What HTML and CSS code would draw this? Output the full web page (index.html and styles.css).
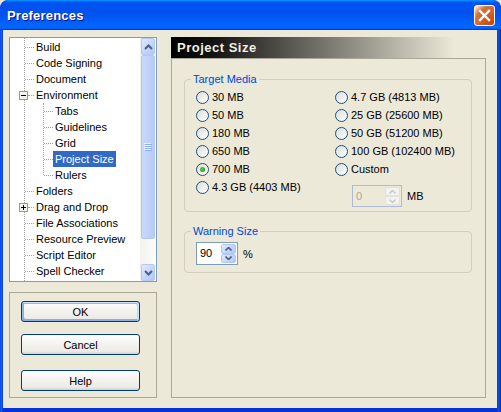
FILE: index.html
```html
<!DOCTYPE html>
<html>
<head>
<meta charset="utf-8">
<link rel="stylesheet" href="styles.css">
</head>
<body>
<div class="window">
  <div class="titlebar">
    <span class="title">Preferences</span>
    <button class="close" aria-label="Close">
      <svg width="13" height="13" viewBox="0 0 13 13"><path d="M2 2L11 11M11 2L2 11" stroke="#fff" stroke-width="2.4" stroke-linecap="square"/></svg>
    </button>
  </div>
  <div class="client">
    <div class="left">
      <div class="tree">
        <div class="tree-list">
          <div class="row l1"><span class="hl"></span><span class="lbl">Build</span></div>
          <div class="row l1"><span class="hl"></span><span class="lbl">Code Signing</span></div>
          <div class="row l1"><span class="hl"></span><span class="lbl">Document</span></div>
          <div class="row l1 exp-row"><svg class="exp" width="9" height="9" viewBox="0 0 9 9"><rect x="0.5" y="0.5" width="8" height="8" fill="#F4F3EE" stroke="#919B9C"/><path d="M2 4.5H7" stroke="#000"/></svg><span class="hl short"></span><span class="lbl">Environment</span></div>
          <div class="children">
            <div class="row l2"><span class="hl"></span><span class="lbl">Tabs</span></div>
            <div class="row l2"><span class="hl"></span><span class="lbl">Guidelines</span></div>
            <div class="row l2"><span class="hl"></span><span class="lbl">Grid</span></div>
            <div class="row l2"><span class="hl"></span><span class="lbl sel">Project Size</span></div>
            <div class="row l2"><span class="hl"></span><span class="lbl">Rulers</span></div>
          </div>
          <div class="row l1"><span class="hl"></span><span class="lbl">Folders</span></div>
          <div class="row l1 exp-row"><svg class="exp" width="9" height="9" viewBox="0 0 9 9"><rect x="0.5" y="0.5" width="8" height="8" fill="#F4F3EE" stroke="#919B9C"/><path d="M2 4.5H7M4.5 2V7" stroke="#000"/></svg><span class="hl short"></span><span class="lbl">Drag and Drop</span></div>
          <div class="row l1"><span class="hl"></span><span class="lbl">File Associations</span></div>
          <div class="row l1"><span class="hl"></span><span class="lbl">Resource Preview</span></div>
          <div class="row l1"><span class="hl"></span><span class="lbl">Script Editor</span></div>
          <div class="row l1"><span class="hl"></span><span class="lbl">Spell Checker</span></div>
        </div>
        <div class="vscroll">
          <div class="sb-btn"><svg width="9" height="6" viewBox="0 0 9 6"><path d="M1 5L4.5 1.5L8 5" fill="none" stroke="#4D6185" stroke-width="2"/></svg></div>
          <div class="sb-thumb"><svg width="8" height="8" viewBox="0 0 8 8"><path d="M0 0.5H7M0 2.5H7M0 4.5H7M0 6.5H7" stroke="#EEF4FE"/><path d="M1 1.5H8M1 3.5H8M1 5.5H8M1 7.5H8" stroke="#8CB0F8"/></svg></div>
          <div class="sb-track"></div>
          <div class="sb-btn"><svg width="9" height="6" viewBox="0 0 9 6"><path d="M1 1L4.5 4.5L8 1" fill="none" stroke="#4D6185" stroke-width="2"/></svg></div>
        </div>
      </div>
      <div class="actions">
        <button class="btn default">OK</button>
        <button class="btn cancel">Cancel</button>
        <button class="btn help">Help</button>
      </div>
    </div>
    <div class="panel">
      <div class="panel-head">Project Size</div>
      <div class="panel-body">
        <fieldset class="group media">
          <legend>Target Media</legend>
          <div class="cols">
            <div class="col col1">
              <label class="opt"><span class="radio"></span>30 MB</label>
              <label class="opt"><span class="radio"></span>50 MB</label>
              <label class="opt"><span class="radio"></span>180 MB</label>
              <label class="opt"><span class="radio"></span>650 MB</label>
              <label class="opt"><span class="radio checked"></span>700 MB</label>
              <label class="opt"><span class="radio"></span>4.3 GB (4403 MB)</label>
            </div>
            <div class="col col2">
              <label class="opt"><span class="radio"></span>4.7 GB (4813 MB)</label>
              <label class="opt"><span class="radio"></span>25 GB (25600 MB)</label>
              <label class="opt"><span class="radio"></span>50 GB (51200 MB)</label>
              <label class="opt"><span class="radio"></span>100 GB (102400 MB)</label>
              <label class="opt"><span class="radio"></span>Custom</label>
              <div class="spin-row custom">
                <div class="spinner disabled wide">
                  <span class="spin-val">0</span>
                  <span class="spin-btns">
                    <span class="sbtn"><svg width="7" height="4" viewBox="0 0 7 4"><path d="M0.5 3.5L3.5 0.5L6.5 3.5" fill="none" stroke="#C2C6D0" stroke-width="1.4"/></svg></span>
                    <span class="sbtn"><svg width="7" height="4" viewBox="0 0 7 4"><path d="M0.5 0.5L3.5 3.5L6.5 0.5" fill="none" stroke="#C2C6D0" stroke-width="1.4"/></svg></span>
                  </span>
                </div>
                <span class="unit">MB</span>
              </div>
            </div>
          </div>
        </fieldset>
        <fieldset class="group warn">
          <legend>Warning Size</legend>
          <div class="spin-row inner">
            <div class="spinner">
              <span class="spin-val">90</span>
              <span class="spin-btns">
                <span class="sbtn"><svg width="7" height="4" viewBox="0 0 7 4"><path d="M0.5 3.5L3.5 0.5L6.5 3.5" fill="none" stroke="#4D6185" stroke-width="1.6"/></svg></span>
                <span class="sbtn"><svg width="7" height="4" viewBox="0 0 7 4"><path d="M0.5 0.5L3.5 3.5L6.5 0.5" fill="none" stroke="#4D6185" stroke-width="1.6"/></svg></span>
              </span>
            </div>
            <span class="unit">%</span>
          </div>
        </fieldset>
      </div>
    </div>
  </div>
</div>
</body>
</html>
```

FILE: styles.css
```css
* { box-sizing: border-box; }
html, body { margin: 0; padding: 0; }
body {
  width: 501px;
  height: 412px;
  overflow: hidden;
  background: #ECE9D8;
  font-family: "Liberation Sans", Arial, sans-serif;
  font-size: 11px;
  color: #000;
}
.window {
  width: 501px;
  height: 412px;
  display: flex;
  flex-direction: column;
  background: linear-gradient(to right, #0831D9 0, #166AEE 1px, #0855DD 2px, #0831D9 3px, #0831D9 497px, #0855DD 498px, #0842D0 500px, #001EA0 501px);
  border-radius: 8px 8px 0 0;
  overflow: hidden;
}
.titlebar {
  height: 30px;
  flex: none;
  display: flex;
  align-items: center;
  justify-content: space-between;
  padding: 1px 6px 0 7px;
  background: linear-gradient(to bottom, #0997FF 0, #0053EE 8%, #0050EE 40%, #0066FF 88%, #0066FF 93%, #005BFF 95%, #003DD7 96%, #003DD7 100%);
  border-radius: 8px 8px 0 0;
}
.title {
  color: #fff;
  font-weight: bold;
  font-size: 13px;
  letter-spacing: 0.2px;
  text-shadow: 1px 1px #0F1089;
}
.close {
  width: 21px;
  height: 21px;
  padding: 0;
  margin: 0;
  border: 1px solid #fff;
  border-radius: 3px;
  background: radial-gradient(circle at 90% 90%, #CC4600 0, #DC6527 55%, #CD7546 70%, #FFCCB2 90%, #fff 100%);
  display: flex;
  align-items: center;
  justify-content: center;
}
.client {
  flex: 1;
  margin: 0 4px 4px 3px;
  background: #ECE9D8;
  display: flex;
  align-items: flex-start;
  padding: 7px 0 0 6px;
}
.left {
  width: 148px;
  flex: none;
  display: flex;
  flex-direction: column;
}
.tree {
  height: 245px;
  border: 1px solid #7F9DB9;
  background: #fff;
  display: flex;
}
.tree-list {
  flex: 1;
  position: relative;
  padding-top: 1px;
}
.tree-list::before {
  content: "";
  position: absolute;
  left: 14px;
  top: 0;
  bottom: 0;
  border-left: 1px dotted #A0A0A0;
}
.children { position: relative; }
.children::before {
  content: "";
  position: absolute;
  left: 33px;
  top: 0;
  bottom: 8px;
  border-left: 1px dotted #A0A0A0;
}
.row {
  height: 16px;
  display: flex;
  align-items: center;
  position: relative;
  white-space: nowrap;
}
.row.l1 { padding-left: 15px; }
.row.l2 { padding-left: 34px; }
.row.exp-row { padding-left: 9px; }
.hl {
  width: 9px;
  height: 0;
  border-top: 1px dotted #A0A0A0;
  flex: none;
}
.hl.short { width: 6px; }
.exp { flex: none; display: block; position: relative; }
.lbl {
  padding: 0 2px;
  height: 16px;
  line-height: 16px;
}
.lbl.sel {
  background: #316AC5;
  color: #fff;
}
.vscroll {
  width: 16px;
  flex: none;
  display: flex;
  flex-direction: column;
  background: linear-gradient(to right, #F3F1EC, #FEFEFB);
}
.sb-btn {
  height: 17px;
  flex: none;
  margin: 0 1px;
  border: 1px solid #B5C8F2;
  border-radius: 2px;
  background: linear-gradient(135deg, #E1EAFE, #C1D3FB 60%, #B4C8F6);
  display: flex;
  align-items: center;
  justify-content: center;
}
.sb-thumb {
  height: 184px;
  flex: none;
  margin: 0 1px;
  border: 1px solid #B5C8F2;
  border-radius: 2px;
  background: linear-gradient(to right, #C9D8FC, #C1D3FB 50%, #B6CAF7);
  display: flex;
  align-items: center;
  justify-content: center;
}
.sb-track { flex: 1; }
.actions {
  margin-top: 10px;
  height: 106px;
  border: 1px solid #ACA899;
  display: flex;
  flex-direction: column;
  padding: 8px 0 0 11px;
}
.btn {
  width: 119px;
  height: 21px;
  flex: none;
  margin: 0;
  padding: 0;
  font-family: "Liberation Sans", Arial, sans-serif;
  font-size: 11px;
  color: #000;
  border: 1px solid #003C74;
  border-radius: 3px;
  background: linear-gradient(to bottom, #FFFFFF, #F5F4F0 40%, #ECEBE6 86%, #D6D0C5);
}
.btn.default {
  box-shadow: inset -1px 1px #CEE7FF, inset 1px 2px #98B8EA, inset -2px 2px #BCD4F6, inset 1px -1px #89ADE4, inset 2px -2px #89ADE4;
}
.btn.cancel { margin-top: 12px; }
.btn.help { margin-top: 15px; }
.panel {
  width: 315px;
  height: 361px;
  margin-left: 14px;
  flex: none;
  display: flex;
  flex-direction: column;
}
.panel-head {
  height: 21px;
  flex: none;
  display: flex;
  align-items: center;
  padding-left: 6px;
  font-weight: bold;
  font-size: 13px;
  letter-spacing: 0.5px;
  color: #F0EEE4;
  background: linear-gradient(to right, #000 0%, #141414 14%, #ECE9D8 90%);
}
.panel-body {
  flex: 1;
  border: 1px solid #ACA899;
  padding: 14px 13px 0 12px;
}
.group {
  margin: 0;
  border: 1px solid #D0D0BF;
  border-radius: 4px;
  padding: 2px 0 4px 0;
  min-width: 0;
}
.group legend {
  padding: 0 2px;
  margin-left: 6px;
  color: #0046D5;
  font-size: 11px;
  line-height: 13px;
}
.group.warn {
  margin-top: 13px;
  padding: 4px 0 7px 0;
}
.cols { display: flex; padding-left: 11px; }
.col1 { width: 139px; flex: none; }
.col2 { flex: 1; }
.opt {
  height: 18px;
  display: flex;
  align-items: center;
  gap: 3px;
  white-space: nowrap;
}
.radio {
  width: 13px;
  height: 13px;
  flex: none;
  border: 1px solid #1C5180;
  border-radius: 50%;
  background: linear-gradient(135deg, #DCDCD7, #FFFFFF);
  display: flex;
  align-items: center;
  justify-content: center;
}
.radio.checked::after {
  content: "";
  width: 5px;
  height: 5px;
  border-radius: 50%;
  background: radial-gradient(circle at 40% 40%, #55D451, #21A121 70%, #1A8A1A);
}
.spin-row {
  display: flex;
  align-items: center;
  gap: 5px;
}
.spin-row.inner { padding-left: 11px; }
.spin-row.custom {
  margin-top: 7px;
  padding-left: 17px;
}
.spinner {
  width: 42px;
  height: 23px;
  border: 1px solid #7F9DB9;
  background: #fff;
  display: flex;
  padding: 1px;
}
.spinner.wide { width: 50px; height: 22px; }
.spin-val {
  flex: 1;
  padding-left: 2px;
  line-height: 19px;
}
.spin-btns {
  width: 15px;
  flex: none;
  display: flex;
  flex-direction: column;
}
.sbtn {
  flex: 1;
  border: 1px solid #B5C8F2;
  border-radius: 2px;
  background: linear-gradient(135deg, #E1EAFE, #C1D3FB 60%, #B4C8F6);
  display: flex;
  align-items: center;
  justify-content: center;
}
.spinner.disabled {
  border-color: #AFBCD3;
  background: #ECE9D8;
}
.spinner.disabled .spin-val { color: #ACA899; }
.spinner.disabled .sbtn {
  border-color: #E3E2DA;
  background: #F4F3EE;
}
.unit { white-space: nowrap; }
```
